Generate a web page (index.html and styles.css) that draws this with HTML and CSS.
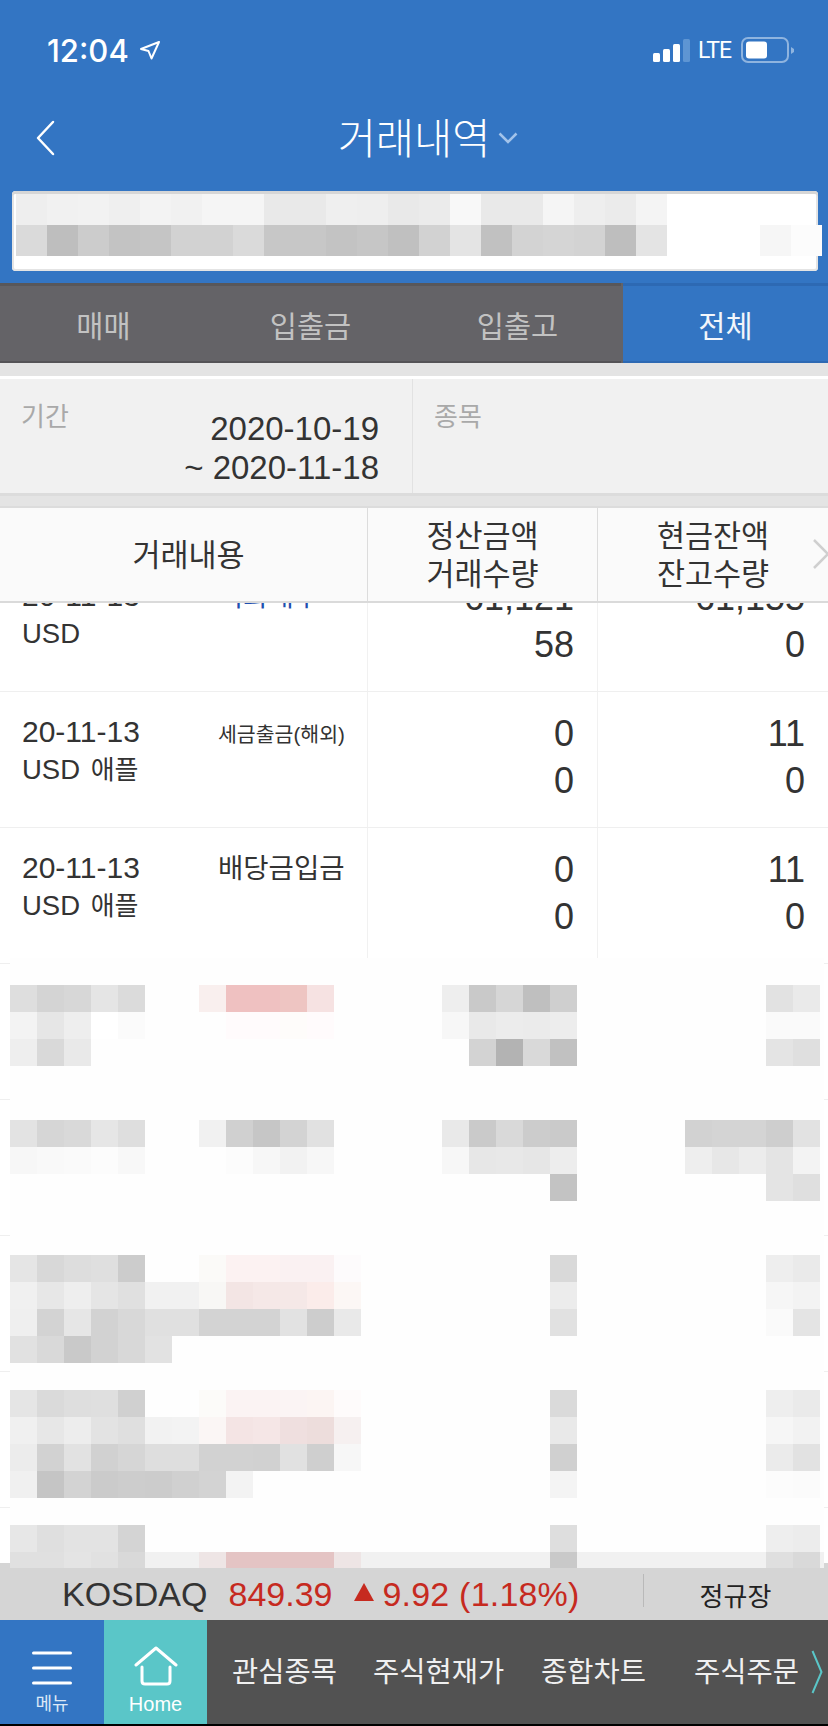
FILE: index.html

```html
<!DOCTYPE html>
<html lang="ko">
<head>
    <meta charset="UTF-8">
    <meta name="viewport" content="width=device-width, initial-scale=1.0">
    <title>거래내역</title>
    <link rel="stylesheet" href="styles.css">
</head>
<body>
    <header class="top">
        <div class="status">
            <div class="status-left">
                <span class="time">12:04</span>
                <svg class="arrow" width="22" height="20" viewBox="0 0 22 20"><path d="M20 2 L2 9 L9.500 11 L12.500 18.500 Z" fill="none" stroke="#fff" stroke-width="2" stroke-linejoin="round"/></svg>
            </div>
            <div class="status-right">
                <svg width="37" height="23" viewBox="0 0 37 23">
                    <rect x="0" y="14" width="7" height="9" rx="1.500" fill="#fff"/>
                    <rect x="10" y="10" width="7" height="13" rx="1.500" fill="#fff"/>
                    <rect x="20" y="5" width="7" height="18" rx="1.500" fill="#fff"/>
                    <rect x="30" y="0" width="7" height="23" rx="1.500" fill="#5e95d3"/>
                </svg>
                <span class="lte">LTE</span>
                <svg width="53" height="26" viewBox="0 0 53 26">
                    <rect x="1" y="1" width="46" height="24" rx="6" fill="none" stroke="#8fb4df" stroke-width="2"/>
                    <rect x="5" y="4.500" width="21" height="17" rx="3" fill="#fff"/>
                    <path d="M50 10 L53 12 L53 15 L50 17 Z" fill="#8fb4df"/>
                </svg>
            </div>
        </div>
        <nav class="nav">
            <svg class="back" width="20" height="36" viewBox="0 0 20 36"><path d="M17 2 L2 18 L17 34" fill="none" stroke="#fff" stroke-width="2.500" stroke-linecap="round" stroke-linejoin="round"/></svg>
            <h1 class="nav-title">거래내역</h1>
            <svg class="caret" width="20" height="12" viewBox="0 0 20 12"><path d="M1.500 1.500 L10 10 L18.500 1.500" fill="none" stroke="#a2c3ea" stroke-width="2.500"/></svg>
        </nav>
        <div class="account" id="account"></div>
    </header>

    <div class="tabs">
        <div class="tab">매매</div>
        <div class="tab">입출금</div>
        <div class="tab">입출고</div>
        <div class="tab active">전체</div>
    </div>

    <div class="strip-top"></div>

    <section class="filter">
        <div class="period">
            <div class="filter-label">기간</div>
            <div class="dates">2020-10-19<br>~ 2020-11-18</div>
        </div>
        <div class="stock">
            <div class="filter-label">종목</div>
        </div>
    </section>

    <div class="strip-mid"></div>

    <div class="thead">
        <div class="th">거래내용</div>
        <div class="th">정산금액<br>거래수량</div>
        <div class="th">현금잔액<br>잔고수량</div>
        <svg class="th-more" width="18" height="30" viewBox="0 0 18 30"><path d="M2 1 L16 15 L2 29" fill="none" stroke="#cfcfcf" stroke-width="2.500"/></svg>
    </div>

    <main class="list">
        <div class="rows">
            <div class="row first">
                <div class="td-info">
                    <div class="when">20-11-13<div class="sub">USD</div></div>
                    <div class="kind buy">외화매수</div>
                </div>
                <div class="td-num">61,121<br>58</div>
                <div class="td-num">61,155<br>0</div>
            </div>
            <div class="row">
                <div class="td-info">
                    <div class="when">20-11-13<div class="sub">USD <span class="sub-name">애플</span></div></div>
                    <div class="kind small">세금출금(해외)</div>
                </div>
                <div class="td-num">0<br>0</div>
                <div class="td-num">11<br>0</div>
            </div>
            <div class="row">
                <div class="td-info">
                    <div class="when">20-11-13<div class="sub">USD <span class="sub-name">애플</span></div></div>
                    <div class="kind">배당금입금</div>
                </div>
                <div class="td-num">0<br>0</div>
                <div class="td-num">11<br>0</div>
            </div>
            <div class="row"></div>
            <div class="row"></div>
            <div class="row"></div>
            <div class="row"></div>
            <div class="row"></div>
        </div>
        <!-- blurred part of the list, drawn by script.js -->
        <div class="cover" id="cover"></div>
    </main>

    <div class="index-bar">
        <div class="index-text">
            <span class="index-name">KOSDAQ</span>
            <span class="index-value">849.39</span>
            <span class="index-up"></span>
            <span class="index-change">9.92 (1.18%)</span>
        </div>
        <div class="index-state">정규장</div>
    </div>

    <footer class="bottom">
        <div class="menu-btn">
            <svg width="40" height="34" viewBox="0 0 40 34"><path d="M1.500 2 H38.500 M1.500 17 H38.500 M1.500 32 H38.500" stroke="#fff" stroke-width="3" stroke-linecap="round"/></svg>
            <span class="btn-label">메뉴</span>
        </div>
        <div class="home-btn">
            <svg width="44" height="40" viewBox="0 0 44 40"><path d="M2 19 L22 2 L42 19 M8 21 V35 Q8 38 11 38 H33 Q36 38 36 35 V21" fill="none" stroke="#fff" stroke-width="3" stroke-linecap="round" stroke-linejoin="round"/></svg>
            <span class="btn-label">Home</span>
        </div>
        <div class="quick">
            <span class="quick-item">관심종목</span>
            <span class="quick-item">주식현재가</span>
            <span class="quick-item">종합차트</span>
            <span class="quick-item">주식주문</span>
        </div>
        <svg class="quick-more" width="12" height="44" viewBox="0 0 12 44"><path d="M1.500 1 L10.500 22 L1.500 43" fill="none" stroke="#5ac6c8" stroke-width="2"/></svg>
    </footer>

    <script src="script.js"></script>
</body>
</html>
```

FILE: styles.css

```css
* {
    box-sizing: border-box;
}
html, body {
    margin: 0;
    padding: 0;
}
body {
    width: 828px;
    height: 1726px;
    overflow: hidden;
    background-color: #000;
    font-family: "Liberation Sans", "Noto Sans CJK KR", sans-serif;
    color: #333;
}

/* Blue header */
.top {
    height: 283px;
    background-color: #3375c3;
    color: #fff;
}
.status {
    height: 100px;
    padding: 0 34px 0 47px;
    display: flex;
    justify-content: space-between;
    align-items: center;
}
.status-left {
    display: flex;
    align-items: center;
    gap: 10px;
}
.time {
    font-family: Inter, sans-serif;
    font-size: 31px;
    font-weight: 500;
}
.arrow {
    margin-top: -1px;
}
.status-right {
    display: flex;
    align-items: center;
    gap: 8px;
}
.lte {
    margin-right: 2px;
    font-family: Roboto, sans-serif;
    font-size: 23px;
    letter-spacing: -1px;
    color: #fff;
}
.nav {
    height: 76px;
    position: relative;
    display: flex;
    justify-content: center;
    align-items: center;
}
.back {
    position: absolute;
    left: 36px;
    top: 20px;
}
.nav-title {
    margin: 4px 0 0 0;
    font-size: 41.500px;
    font-weight: 300;
    line-height: 72px;
}
.caret {
    margin: 0 -28px 0 8px;
}
.account {
    height: 80px;
    margin: 15px 10px 0 12px;
    padding: 3px 0 0 4px;
    background-color: #fff;
    border-radius: 4px;
    box-shadow: inset 0 3px 0 #d6d6d6, inset 0 -2px 0 #e4e4e4, inset 2px 0 0 #e4e4e4, inset -2px 0 0 #e4e4e4;
}

/* Tabs */
.tabs {
    height: 80px;
    display: grid;
    grid-template-columns: repeat(4, 207px);
    background-color: #646367;
}
.tab {
    display: flex;
    justify-content: center;
    align-items: center;
    background-color: #646367;
    border-top: 3px solid #58575a;
    border-bottom: 2px solid #545356;
    font-size: 29.500px;
    color: #c2c2c2;
}
.tab.active {
    margin-left: 2px;
    background-color: #3375c3;
    border-top-color: #2d69b3;
    border-bottom-color: #2d69b3;
    color: #f2f6fb;
}

/* Search filter */
.strip-top {
    height: 16px;
    background-color: #e4e4e4;
    border-bottom: 3px solid #fff;
}
.filter {
    height: 114px;
    display: grid;
    grid-template-columns: 413px 1fr;
    background-color: #f1f1f1;
}
.period {
    padding: 20px 33px 0 21px;
    border-right: 1px solid #e2e2e2;
}
.stock {
    padding: 20px 0 0 21px;
}
.filter-label {
    font-size: 26px;
    line-height: 36px;
    color: #a9a9a9;
}
.dates {
    margin-top: -25px;
    font-size: 33px;
    line-height: 38.500px;
    text-align: right;
    color: #333;
}
.strip-mid {
    height: 15px;
    background-color: #e4e4e4;
    border-top: 3px solid #dcdcdc;
    border-bottom: 2px solid #dcdcdc;
}

/* Table head */
.thead {
    height: 95px;
    position: relative;
    display: grid;
    grid-template-columns: 367px 230px 1fr;
    background-color: #fafafa;
    border-bottom: 2px solid #dadada;
}
.th {
    display: flex;
    align-items: center;
    justify-content: center;
    text-align: center;
    font-size: 30.500px;
    line-height: 38px;
    color: #333;
    border-left: 1px solid #dcdcdc;
}
.th:first-child {
    border-left: 0;
    padding-left: 10px;
}
.th-more {
    position: absolute;
    right: -2px;
    top: 31px;
}

/* List */
.list {
    height: 960px;
    position: relative;
    background-color: #fff;
}
.rows {
    height: 960px;
    overflow: hidden;
}
.row {
    height: 136px;
    display: grid;
    grid-template-columns: 367px 230px 1fr;
    border-bottom: 1px solid #efefef;
}
.row.first {
    margin-top: -47px;
}
.td-info {
    display: flex;
    padding: 21px 0 0 22px;
}
.when {
    width: 196px;
    flex-shrink: 0;
    font-size: 30px;
    line-height: 38px;
}
.sub {
    font-size: 27.500px;
}
.sub-name {
    margin-left: 3px;
    font-size: 26px;
}
.kind {
    padding-top: 1px;
    font-size: 27.500px;
    line-height: 38px;
    white-space: nowrap;
}
.kind.small {
    font-size: 20.500px;
    padding-top: 3px;
}
.kind.buy {
    color: #1f4fb0;
}
.td-num {
    padding: 18px 23px 0 0;
    border-left: 1px solid #f1f1f1;
    text-align: right;
    font-size: 36px;
    line-height: 47px;
}
.cover {
    position: absolute;
    left: 10px;
    right: 4px;
    top: 355px;
    height: 610px;
    padding-top: 27px;
    overflow: hidden;
    background-color: #fefefe;
}
.mosaic-group {
    height: 135px;
}
.mosaic-row {
    display: grid;
    height: 27px;
    grid-template-columns: repeat(30, 27px);
}
.mosaic-row.band {
    background-color: #f1f1f1;
}
.account .mosaic-row {
    height: 31px;
    grid-template-columns: repeat(26, 31px);
}

/* Index bar */
.index-bar {
    height: 57px;
    display: flex;
    background-color: #d5d5d5;
    padding-top: 5px;
}
.index-text {
    width: 643px;
    padding-left: 62px;
    display: flex;
    align-items: center;
    font-size: 34px;
    white-space: nowrap;
}
.index-name {
    color: #333;
}
.index-value {
    margin-left: 21px;
    color: #c62a1f;
}
.index-up {
    width: 0;
    height: 0;
    margin: -5px 8px 0 22px;
    border-left: 10.500px solid transparent;
    border-right: 10.500px solid transparent;
    border-bottom: 18px solid #c62a1f;
}
.index-change {
    letter-spacing: 0.2px;
    color: #c62a1f;
}
.index-state {
    flex: 1;
    position: relative;
    display: flex;
    justify-content: center;
    align-items: center;
    font-size: 26px;
    color: #222;
}
.index-state::before {
    content: "";
    position: absolute;
    left: 0;
    top: 6px;
    height: 33px;
    width: 1px;
    background-color: #b9b9b9;
}

/* Bottom menu */
.bottom {
    height: 104px;
    position: relative;
    display: flex;
    background-color: #525252;
}
.menu-btn, .home-btn {
    width: 104px;
    display: flex;
    flex-direction: column;
    align-items: center;
    justify-content: flex-end;
    padding-bottom: 9px;
    color: #fff;
}
.menu-btn {
    background-color: #3375c3;
    gap: 8px;
}
.home-btn {
    width: 103px;
    background-color: #5ac6c8;
    gap: 7px;
}
.btn-label {
    font-size: 20px;
    line-height: 22px;
}
.menu-btn .btn-label {
    font-size: 18px;
    color: #dce8f6;
}
.quick {
    flex: 1;
    position: relative;
    font-size: 28.500px;
    color: #f0f0f0;
}
.quick-item {
    position: absolute;
    top: 30px;
    line-height: 44px;
    white-space: nowrap;
}
.quick-item:nth-child(1) { left: 25px; }
.quick-item:nth-child(2) { left: 166px; }
.quick-item:nth-child(3) { left: 334px; }
.quick-item:nth-child(4) { left: 487px; }
.quick-more {
    position: absolute;
    right: 5px;
    top: 30px;
}
```

FILE: script.js

```js
// Shades for the blurred blocks: two digits = gray, six digits = colour, dot = empty
const accountRows = [
    "ee f1 f2 ef f3 f1 f5 f5 e9 e9 ef ee e9 eb f8 e9 e9 f5 ee eb f4 . . . . .",
    "da be cc c3 c5 d2 d2 da c7 c7 c3 c6 c0 d2 e4 c1 d3 d5 d3 be e4 . . . f6 fc"
];

const coverGroups = [
    [
        "de d4 d7 e5 db . . f9efee efc1c1 efc1c1 eec5c2 f6e2e2 . . . . ee c9 d6 bf cf . . . . . . . e2 ea",
        "f3 e6 ee ff fb . . . fffbfc fffbfc fefcfa fffbfc . . . . f7 e9 ec eb ed . . . . . . . fa fa",
        "ee d9 e9 . . . . . . . . . . . . . . d3 b3 d9 c1 . . . . . . . e4 df"
    ],
    [
        "e3 d6 d9 e6 de . . f1 d0 c6 d3 e1 . . . . e9 ca d9 cc ca . . . . d2 d4 d4 ce e2",
        "f7 f9 fa fc f8 . . . fc f7 f2 f7 . . . . f7 e7 e8 e6 ed . . . . ee e7 ec e4 f3",
        ". . . . . . . . . . . . . . . . . . . . c3 . . . . . . . e4 df"
    ],
    [
        "e5 d8 dd df cc . . fbfaf8 fcf2f2 fcf2f2 faf1f2 faf1f2 fdfbfc . . . . . . . d9 . . . . . . . ee ea",
        "f0 e7 ee e5 e0 f1 f1 f8f7f5 f3e5e4 f5e8e7 f5e8e7 fbecea fcf7f5 . . . . . . . ec . . . . . . . f6 f3",
        "ef d3 e6 d2 d8 e0 e0 d3 d3 d3 e2 cd e9 . . . . . . . e1 . . . . . . . fa e4",
        "e1 d9 c9 d2 d8 e2 . . . . . . . . . . . . . . . . . . . . . . . ."
    ],
    [
        "e5 da de df d0 . . fcfbf9 fbf3f3 fbf3f3 fbf4f4 fcf5f3 fefbfb . . . . . . . da . . . . . . . ee ea",
        "f0 e7 ed e3 df f2 f3 fbf6f5 f4e4e4 f5e6e6 efdfdf eddddc f6f0f0 . . . . . . . e9 . . . . . . . f6 f2",
        "ec d2 e2 d1 d6 de de d2 d2 d1 e1 cf f7 . . . . . . . d0 . . . . . . . eb e2",
        "f0 c5 d3 cb cd cc d0 d3 f3 . . . . . . . . . . . f4 . . . . . . . fc fb"
    ],
    [
        "e7 df e3 e3 d4 . . . . . . . . . . . . . . . de . . . . . . . ee ec",
        "e0 e0 e4 e1 d9 . . eee5e5 e4c4c4 e4c4c4 e4c4c4 e4c4c4 eee5e5 . . . . . . . c9 . . . . . . . df d9"
    ]
];

function addRow(parent, line) {
    const row = document.createElement("div");
    row.className = "mosaic-row";
    line.split(" ").forEach(shade => {
        const cell = document.createElement("div");
        if (shade !== ".") {
            const hex = shade.length === 2 ? shade + shade + shade : shade;
            cell.style.backgroundColor = "#" + hex;
        }
        row.appendChild(cell);
    });
    parent.appendChild(row);
    return row;
}

const account = document.getElementById("account");
accountRows.forEach(line => addRow(account, line));

const cover = document.getElementById("cover");
coverGroups.forEach(lines => {
    const group = document.createElement("div");
    group.className = "mosaic-group";
    lines.forEach(line => addRow(group, line));
    cover.appendChild(group);
});

// the last blurred row runs under the index bar's edge
cover.lastChild.lastChild.classList.add("band");
```
